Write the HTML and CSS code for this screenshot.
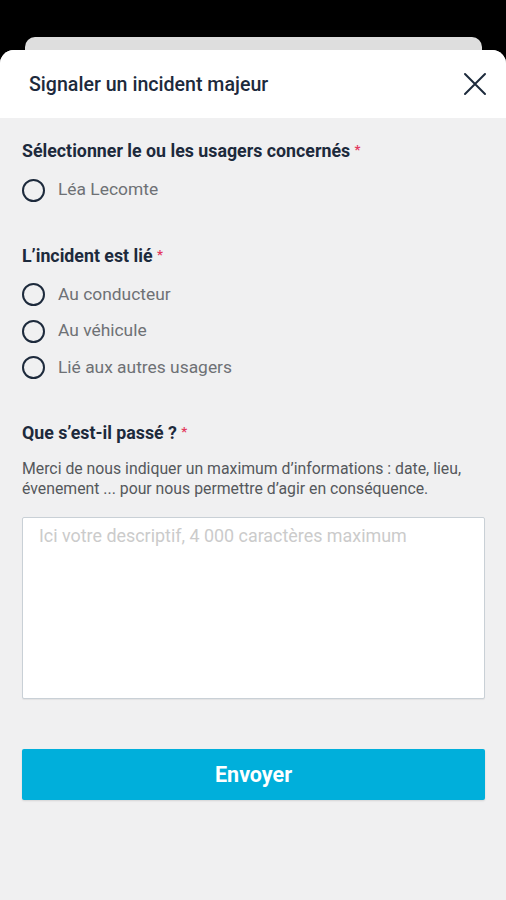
FILE: index.html
```html
<!DOCTYPE html>
<html lang="fr">
<head>
<meta charset="utf-8">
<title>Signaler un incident majeur</title>
<link rel="stylesheet" href="styles.css">
</head>
<body>
<div class="backcard"></div>
<div class="sheet">
  <header class="sheet-header">
    <h1 class="sheet-title">Signaler un incident majeur</h1>
    <button class="close" aria-label="Fermer">
      <svg width="24" height="24" viewBox="0 0 24 24"><path d="M2 2 L22 22 M22 2 L2 22" stroke="#1d2a3c" stroke-width="2" fill="none" stroke-linecap="round"/></svg>
    </button>
  </header>
  <main class="sheet-body">
    <section class="section">
      <h2 class="label">Sélectionner le ou les usagers concernés <span class="req">*</span></h2>
      <div class="radios">
        <label class="radio"><span class="circle"></span><span class="radio-text">Léa Lecomte</span></label>
      </div>
    </section>
    <section class="section">
      <h2 class="label">L’incident est lié <span class="req">*</span></h2>
      <div class="radios">
        <label class="radio"><span class="circle"></span><span class="radio-text">Au conducteur</span></label>
        <label class="radio"><span class="circle"></span><span class="radio-text">Au véhicule</span></label>
        <label class="radio"><span class="circle"></span><span class="radio-text">Lié aux autres usagers</span></label>
      </div>
    </section>
    <section class="section">
      <h2 class="label">Que s’est-il passé ? <span class="req">*</span></h2>
      <p class="help">Merci de nous indiquer un maximum d’informations : date, lieu, évenement ... pour nous permettre d’agir en conséquence.</p>
      <div class="textarea"><span class="placeholder">Ici votre descriptif, 4 000 caractères maximum</span></div>
      <button class="submit">Envoyer</button>
    </section>
  </main>
</div>
</body>
</html>
```
FILE: styles.css
```css
* { box-sizing: border-box; }
html, body { margin: 0; padding: 0; }
body {
  background: #000;
  font-family: Roboto, "Noto Sans", "Liberation Sans", sans-serif;
  width: 506px;
  height: 900px;
  overflow: hidden;
}
.backcard {
  margin: 37px 24px 0 25px;
  height: 13px;
  background: #dedede;
  border-radius: 10px 10px 0 0;
}
.sheet {
  height: 850px;
  background: #f0f0f1;
  border-radius: 14px 14px 0 0;
  overflow: hidden;
  display: flex;
  flex-direction: column;
}
.sheet-header {
  height: 68px;
  background: #fff;
  display: flex;
  align-items: center;
  justify-content: space-between;
  padding: 0 19px 0 29px;
}
.sheet-title {
  margin: 0;
  font-size: 19.6px;
  line-height: 24px;
  font-weight: 500;
  color: #1d2a3c;
  position: relative;
  top: 1px;
}
.close {
  border: 0;
  background: none;
  padding: 0;
  width: 24px;
  height: 24px;
  display: flex;
}
.sheet-body {
  padding: 23px 21px 0 22px;
  display: flex;
  flex-direction: column;
  gap: 37px;
}
.section { display: flex; flex-direction: column; }
.label {
  margin: 0;
  font-size: 17.8px;
  line-height: 20px;
  font-weight: 700;
  color: #1d2a3c;
}
.req { color: #e33a5f; font-size: 13px; vertical-align: top; position: relative; top: -1px; }
.radios { margin-top: 11px; display: flex; flex-direction: column; }
.radio {
  height: 36.5px;
  display: flex;
  align-items: center;
  gap: 13px;
}
.circle {
  width: 23px;
  height: 23px;
  border: 2px solid #1d2a3c;
  border-radius: 50%;
  flex: none;
}
.radio-text {
  font-size: 17.4px;
  color: #6e7175;
  position: relative;
  top: -1px;
}
.help {
  margin: 16px 0 0;
  font-size: 15.8px;
  line-height: 20px;
  color: #55585c;
}
.textarea {
  margin-top: 18px;
  height: 182px;
  background: #fff;
  border: 1px solid #c9d0d6;
  border-radius: 2px;
  padding: 8px 16px;
  box-shadow: 0 1px 1px rgba(0,0,0,0.06);
}
.placeholder {
  font-size: 17.9px;
  line-height: 20px;
  color: #cbcbcb;
}
.submit {
  margin-top: 50px;
  height: 51px;
  border: 0;
  border-radius: 2px;
  background: #00afdb;
  color: #fff;
  font-family: Roboto, "Noto Sans", sans-serif;
  font-size: 21.5px;
  font-weight: 700;
  box-shadow: 0 1px 2px rgba(0,0,0,0.12);
}
```
